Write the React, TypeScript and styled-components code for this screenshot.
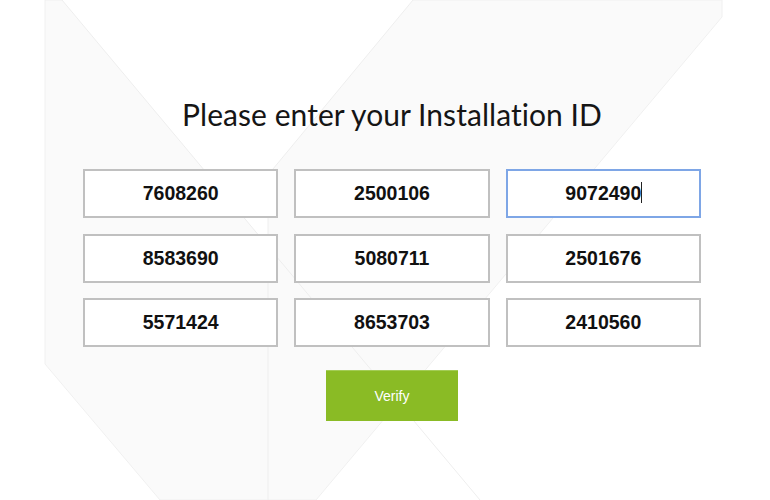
import React from "react";
import styled, { createGlobalStyle } from "styled-components";

const ids = [
  "7608260",
  "2500106",
  "9072490",
  "8583690",
  "5080711",
  "2501676",
  "5571424",
  "8653703",
  "2410560",
];

const ACTIVE = 2;

const GlobalStyle = createGlobalStyle`
  html, body {
    margin: 0;
    padding: 0;
    background: #fff;
  }
`;

const Page = styled.div`
  position: relative;
  width: 100%;
  height: 500px;
  overflow: hidden;
  background: #fff;
`;

const Backdrop = styled.svg`
  position: absolute;
  top: 0;
  left: 0;
  width: 770px;
  height: 500px;
  z-index: 0;
`;

const Content = styled.div`
  position: relative;
  z-index: 1;
  display: flex;
  flex-direction: column;
  align-items: center;
  padding: 96px 0 0 14px;
`;

const Title = styled.h1`
  margin: 0 0 37px;
  font-family: Lato, "Open Sans", sans-serif;
  font-weight: 400;
  font-size: 30px;
  letter-spacing: 0.05px;
  line-height: 36px;
  color: #151515;
`;

const Grid = styled.div`
  width: 618px;
  display: grid;
  grid-template-columns: repeat(3, 1fr);
  column-gap: 16px;
  row-gap: 15.5px;
`;

const Cell = styled.div`
  position: relative;
  height: 49px;
`;

const IdInput = styled.input<{ $active?: boolean }>`
  box-sizing: border-box;
  width: 100%;
  height: 100%;
  margin: 0;
  padding: 0 10px;
  border: 2px solid ${(p) => (p.$active ? "#7ea6e6" : "#c0c0c0")};
  border-radius: 0;
  background: #fff;
  outline: none;
  text-align: center;
  font-family: "Liberation Sans", Arial, sans-serif;
  font-weight: 700;
  font-size: 19.5px;
  color: #111;
`;

const Caret = styled.span`
  position: absolute;
  top: 13px;
  left: calc(50% + 38px);
  width: 1px;
  height: 21px;
  background: #222;
`;

const VerifyButton = styled.button`
  margin-top: 23px;
  width: 132px;
  height: 51px;
  border: none;
  border-top: 1px solid #a3cc55;
  border-radius: 0;
  background: #8abb25;
  color: #fff;
  font-family: "Liberation Sans", Arial, sans-serif;
  font-size: 14px;
  cursor: pointer;
`;

const App = () => {
  return (
    <Page>
      <GlobalStyle />
      <Backdrop viewBox="0 0 770 500">
        <path
          d="M45 0 H722 V17 L316 500 H160 L45 364 Z"
          fill="#fafafa"
          stroke="#f0f0f0"
        />
        <path d="M62 0 H413 L268 175 V246 Z" fill="#fff" />
        <g stroke="#eeeeee" strokeWidth="1" fill="none">
          <path d="M62 0 L480 500" />
          <path d="M413 0 L268 175 V500" />
        </g>
      </Backdrop>
      <Content>
        <Title>Please enter your Installation ID</Title>
        <Grid>
          {ids.map((id, i) => (
            <Cell key={id}>
              <IdInput defaultValue={id} $active={i === ACTIVE} />
              {i === ACTIVE && <Caret />}
            </Cell>
          ))}
        </Grid>
        <VerifyButton>Verify</VerifyButton>
      </Content>
    </Page>
  );
};

export default App;
